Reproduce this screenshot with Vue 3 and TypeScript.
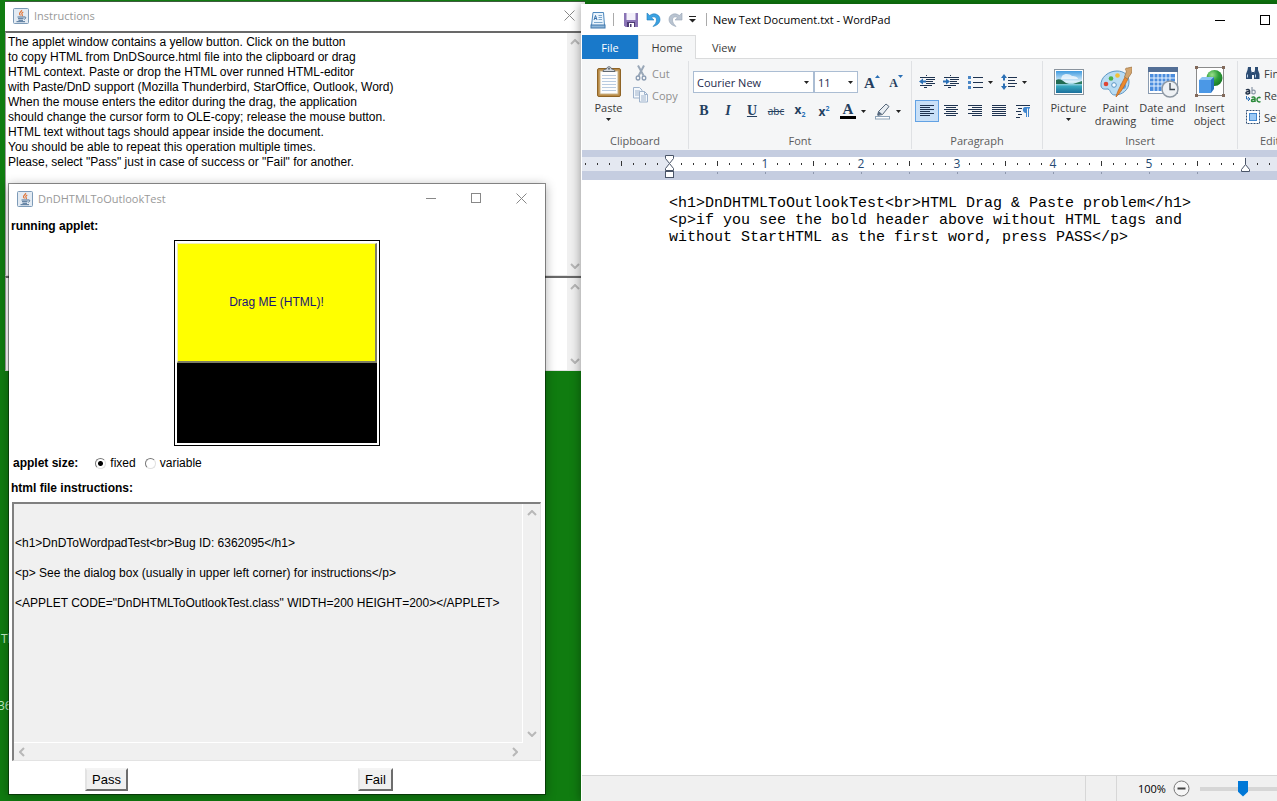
<script setup lang="ts">
import { ref } from 'vue'

const instructions = ref(`The applet window contains a yellow button. Click on the button
to copy HTML from DnDSource.html file into the clipboard or drag
HTML context. Paste or drop the HTML over runned HTML-editor
with Paste/DnD support (Mozilla Thunderbird, StarOffice, Outlook, Word)
When the mouse enters the editor during the drag, the application
should change the cursor form to OLE-copy; release the mouse button.
HTML text without tags should appear inside the document.
You should be able to repeat this operation multiple times.
Please, select "Pass" just in case of success or "Fail" for another.`)

const messages = ref('')

const htmlFile = ref(`

<h1>DnDToWordpadTest<br>Bug ID: 6362095</h1>

<p> See the dialog box (usually in upper left corner) for instructions</p>

<APPLET CODE="DnDHTMLToOutlookTest.class" WIDTH=200 HEIGHT=200></APPLET>`)

const documentLines: string[] = [
  '<h1>DnDHTMLToOutlookTest<br>HTML Drag & Paste problem</h1>',
  '<p>if you see the bold header above without HTML tags and',
  'without StartHTML as the first word, press PASS</p>',
]

const appletSize = ref('fixed')
const fontName = ref('Courier New')
const fontSize = ref('11')
const zoom = ref(50)

const origin = 87
const step = 12
const inch = 96

interface Tick { x: number; kind: 'dot' | 'half' }
const ticks: Tick[] = []
for (let i = -7; i <= 55; i++) {
  if (i === 0 || i === 48 || (i > 0 && i % 8 === 0)) continue
  ticks.push({ x: origin + i * step, kind: i % 4 === 0 ? 'half' : 'dot' })
}
const inches = [1, 2, 3, 4, 5]
const tabStops = Array.from({ length: 11 }, (_, i) => origin + (i + 1) * 48)
</script>

<template>
  <main class="desktop">
    <span class="shortcut shortcut-a">Th</span>
    <span class="shortcut shortcut-b">36</span>

    <section class="window instructions" aria-label="Instructions">
      <header class="java-title">
        <svg class="java-icon" width="16" height="16" viewBox="0 0 16 16">
          <rect x=".5" y=".5" width="15" height="15" rx="1" fill="#e3ebf3" stroke="#7d9bb8" />
          <path d="M8.6 2c1 1.400-3 2.200-2 4.200.3.600.9.900.9 1.300M10.300 4c-1.600.8-2 1.600-1 2.800.3.500 0 1-.5 1.300" fill="none" stroke="#e0763a" stroke-width="1.200" />
          <path d="M4.500 9h6.500M5 10.700h5.500M5.500 12.300h4.500M11 9c2.300-.6 2.300 1.600.2 2.300M3.500 13.700h8.500" fill="none" stroke="#4a6f94" />
        </svg>
        <h2>Instructions</h2>
        <span class="spacer"></span>
        <button class="frame-btn" aria-label="Close">
          <svg width="11" height="11" viewBox="0 0 11 11"><path d="M.5.5l10 10M10.500.5l-10 10" stroke="#888" fill="none" /></svg>
        </button>
      </header>
      <div class="java-area grow">
        <textarea v-model="instructions" readonly aria-label="Instructions text"></textarea>
        <div class="vbar">
          <button aria-label="Scroll up"><svg width="10" height="6" viewBox="0 0 10 6"><path d="M1 5l4-4 4 4" /></svg></button>
          <button aria-label="Scroll down"><svg width="10" height="6" viewBox="0 0 10 6"><path d="M1 1l4 4 4-4" /></svg></button>
        </div>
      </div>
      <div class="java-area messages">
        <textarea v-model="messages" readonly aria-label="Messages"></textarea>
        <div class="vbar">
          <button aria-label="Scroll up"><svg width="10" height="6" viewBox="0 0 10 6"><path d="M1 5l4-4 4 4" /></svg></button>
          <button aria-label="Scroll down"><svg width="10" height="6" viewBox="0 0 10 6"><path d="M1 1l4 4 4-4" /></svg></button>
        </div>
      </div>
    </section>

    <section class="window tester" aria-label="DnDHTMLToOutlookTest">
      <header class="java-title">
        <svg class="java-icon" width="16" height="16" viewBox="0 0 16 16">
          <rect x=".5" y=".5" width="15" height="15" rx="1" fill="#e3ebf3" stroke="#7d9bb8" />
          <path d="M8.600 2c1 1.400-3 2.200-2 4.200.3.600.9.900.9 1.300M10.300 4c-1.600.8-2 1.600-1 2.800.3.500 0 1-.5 1.300" fill="none" stroke="#e0763a" stroke-width="1.200" />
          <path d="M4.500 9h6.500M5 10.700h5.500M5.500 12.300h4.500M11 9c2.300-.6 2.300 1.600.2 2.300M3.500 13.700h8.500" fill="none" stroke="#4a6f94" />
        </svg>
        <h2>DnDHTMLToOutlookTest</h2>
        <span class="spacer"></span>
        <button class="frame-btn" aria-label="Minimize">
          <svg width="11" height="11" viewBox="0 0 11 11"><path d="M0 5.500h10" stroke="#888" /></svg>
        </button>
        <button class="frame-btn" aria-label="Maximize">
          <svg width="11" height="11" viewBox="0 0 11 11"><rect x=".5" y=".5" width="9" height="9" stroke="#888" fill="none" /></svg>
        </button>
        <button class="frame-btn" aria-label="Close">
          <svg width="11" height="11" viewBox="0 0 11 11"><path d="M.5.5l10 10M10.500.5l-10 10" stroke="#888" fill="none" /></svg>
        </button>
      </header>
      <h3>running applet:</h3>
      <div class="applet-frame">
        <div class="applet"><button class="drag-btn">Drag ME (HTML)!</button></div>
      </div>
      <div class="size-row">
        <b id="size-label">applet size:</b>
        <div class="radios" role="radiogroup" aria-labelledby="size-label">
          <label><input v-model="appletSize" type="radio" name="size" value="fixed" />fixed</label>
          <label><input v-model="appletSize" type="radio" name="size" value="variable" />variable</label>
        </div>
      </div>
      <h3><label for="html-file">html file instructions:</label></h3>
      <div class="file-area">
        <textarea id="html-file" v-model="htmlFile" readonly wrap="off"></textarea>
        <div class="vbar">
          <button aria-label="Scroll up"><svg width="10" height="6" viewBox="0 0 10 6"><path d="M1 5l4-4 4 4" /></svg></button>
          <button aria-label="Scroll down"><svg width="10" height="6" viewBox="0 0 10 6"><path d="M1 1l4 4 4-4" /></svg></button>
        </div>
        <div class="hbar">
          <button aria-label="Scroll left"><svg width="6" height="10" viewBox="0 0 6 10"><path d="M5 1l-4 4 4 4" /></svg></button>
          <button aria-label="Scroll right"><svg width="6" height="10" viewBox="0 0 6 10"><path d="M1 1l4 4-4 4" /></svg></button>
        </div>
      </div>
      <footer class="verdict">
        <button>Pass</button>
        <button>Fail</button>
      </footer>
    </section>

    <section class="window wordpad" aria-label="WordPad">
      <header class="wp-title">
        <svg width="16" height="18" viewBox="0 0 16 18">
          <path d="M3 1.500h10.500l1 13H1.500z" fill="#eaf4fc" stroke="#4d88bd" />
          <rect x="1" y="14" width="14" height="3" fill="#8fb6d8" stroke="#3f77ab" />
          <path d="M4 9l1.500-4.500L7 9M4.500 7.500h2" stroke="#3a73ad" fill="none" />
          <path d="M8.500 4.500H12M8.500 6.500H12M8.500 8.500H12M4 11.500h8.500" stroke="#7aa6cc" />
        </svg>
        <i class="bar"></i>
        <button class="quick" aria-label="Save">
          <svg width="14" height="14" viewBox="0 0 14 14">
            <path d="M0 0h14v14H1.500L0 12.500z" fill="#8a74b5" />
            <path d="M2.500 0h9v7h-9z" fill="#f3f0fa" /><path d="M3 9h8v5H3z" fill="#4d3b73" /><path d="M5 10h5v4H5z" fill="#fff" /><path d="M6 11h1.500v3H6z" fill="#4d3b73" />
          </svg>
        </button>
        <button class="quick" aria-label="Undo">
          <svg width="15" height="15" viewBox="0 0 15 15"><path d="M1 1v7h7L5.500 5.700C7.500 4 10.500 5 10.500 8c0 2.500-1.500 4.500-3.500 6.500 4-1 7-3.500 7-7C14 2.500 8 0 3.700 3.500z" fill="#3aa3e3" stroke="#1e79b8" stroke-width=".6" /></svg>
        </button>
        <button class="quick" aria-label="Redo">
          <svg width="15" height="15" viewBox="0 0 15 15"><path d="M14 1v7H7l2.500-2.300C7.500 4 4.500 5 4.500 8c0 2.500 1.500 4.500 3.500 6.500-4-1-7-3.500-7-7C1 2.500 7 0 11.300 3.500z" fill="#b9c4d1" stroke="#97a5b5" stroke-width=".6" /></svg>
        </button>
        <button class="quick narrow" aria-label="Customize Quick Access Toolbar">
          <svg width="7" height="7" viewBox="0 0 7 7"><path d="M0 .5h7" stroke="#222" /><path d="M0 3h7L3.500 6.500z" fill="#222" /></svg>
        </button>
        <i class="bar"></i>
        <h1>New Text Document.txt - WordPad</h1>
        <span class="spacer"></span>
        <button class="wp-frame-btn" aria-label="Minimize"><svg width="10" height="10" viewBox="0 0 10 10"><path d="M0 5.500h10" stroke="#000" /></svg></button>
        <button class="wp-frame-btn" aria-label="Maximize"><svg width="10" height="10" viewBox="0 0 10 10"><rect x=".5" y=".5" width="9" height="9" stroke="#000" fill="none" /></svg></button>
        <button class="wp-frame-btn" aria-label="Close"><svg width="10" height="10" viewBox="0 0 10 10"><path d="M0 0l10 10M10 0L0 10" stroke="#000" /></svg></button>
      </header>

      <nav class="tabs">
        <button class="tab file">File</button>
        <button class="tab active">Home</button>
        <button class="tab">View</button>
      </nav>

      <div class="ribbon">
        <div class="group clipboard">
          <div class="body">
            <button class="big">
              <svg width="28" height="32" viewBox="0 0 28 32">
                <rect x="2.500" y="2.500" width="23" height="28" rx="1.500" fill="#b98a45" stroke="#8f6426" />
                <rect x="5" y="5" width="18" height="23" fill="#fdfdfd" stroke="#c9b48c" />
                <path d="M7 9.500h14M7 12.500h14M7 15.500h14M7 18.500h14M7 21.500h14M7 24.500h14" stroke="#b9cbe0" />
                <path d="M8 5.500c0-2 2-2 3.500-2.500C12 0 16 0 16.500 3 18 3.500 20 3.500 20 5.500z" fill="#d5d9de" stroke="#5f6872" />
                <circle cx="14" cy="2.800" r="1" fill="#5f6872" />
              </svg>
              <span>Paste</span>
              <svg class="caret" width="7" height="4" viewBox="0 0 7 4"><path d="M1 0h5L3.500 3z" /></svg>
            </button>
            <div class="stack">
              <button class="small dim">
                <svg width="18" height="18" viewBox="0 0 18 18">
                  <path d="M6 1.500l5.500 10M12 1.500L6.500 12" stroke="#9aa8b8" stroke-width="2" /><ellipse cx="6" cy="14" rx="1.800" ry="2" fill="none" stroke="#8c9db3" stroke-width="1.300" /><ellipse cx="12" cy="14" rx="1.800" ry="2" fill="none" stroke="#8c9db3" stroke-width="1.300" />
                </svg>Cut
              </button>
              <button class="small dim">
                <svg width="18" height="18" viewBox="0 0 18 18" stroke="#9fb3cc" fill="#f4f8fc">
                  <path d="M1.500 1.500h6l2.500 2.500v8H1.500z" /><path d="M3 5h5M3 7h4M3 9h4" /><path d="M7.500 5.500h5l3 3v7.500h-8z" /><path d="M12.500 5.500v3h3M9 10h5M9 12h5M9 14h5" fill="none" />
                </svg>Copy
              </button>
            </div>
          </div>
          <div class="caption">Clipboard</div>
        </div>

        <div class="group font">
          <div class="body rows">
            <div class="row combos">
              <div class="combo wide">
                <select v-model="fontName" aria-label="Font family"><option>Courier New</option></select>
                <svg class="caret" width="5" height="3" viewBox="0 0 5 3"><path d="M0 0h5L2.500 3z" /></svg>
              </div>
              <div class="combo">
                <select v-model="fontSize" aria-label="Font size"><option>11</option></select>
                <svg class="caret" width="5" height="3" viewBox="0 0 5 3"><path d="M0 0h5L2.500 3z" /></svg>
              </div>
              <button class="tool grow-font" aria-label="Grow font"><b>A</b><svg width="5" height="3" viewBox="0 0 5 3"><path d="M0 3h5L2.500 0z" fill="#2a6fb5" /></svg></button>
              <button class="tool shrink-font" aria-label="Shrink font"><b>A</b><svg width="5" height="3" viewBox="0 0 5 3"><path d="M0 0h5L2.500 3z" fill="#2a6fb5" /></svg></button>
            </div>
            <div class="row">
              <button class="tool serif"><b>B</b></button>
              <button class="tool serif"><b><i>I</i></b></button>
              <button class="tool serif"><b><u>U</u></b></button>
              <button class="tool strike"><s>abc</s></button>
              <button class="tool script"><b>x<sub>2</sub></b></button>
              <button class="tool script"><b>x<sup>2</sup></b></button>
              <button class="tool split" aria-label="Text color">
                <span class="ink">A</span>
                <svg class="caret" width="5" height="3" viewBox="0 0 5 3"><path d="M0 0h5L2.500 3z" /></svg>
              </button>
              <button class="tool split" aria-label="Text highlight color">
                <svg width="17" height="17" viewBox="0 0 17 17">
                  <path d="M4.500 8.500L12 1l3 2.500-6.500 8-4.500.8z" fill="#e8edf2" stroke="#56677a" /><path d="M3 12.500l1.500-4.500 3.500 3z" fill="#56697f" /><rect x="1.500" y="13.500" width="14" height="2.500" fill="#fff" stroke="#8ea3b8" />
                </svg>
                <svg class="caret" width="5" height="3" viewBox="0 0 5 3"><path d="M0 0h5L2.500 3z" /></svg>
              </button>
            </div>
          </div>
          <div class="caption">Font</div>
        </div>

        <div class="group paragraph">
          <div class="body rows">
            <div class="row">
              <button class="tool" aria-label="Decrease indent"><svg class="lines" width="16" height="14" viewBox="0 0 16 14"><path d="M1 2.500h15M8 4.500h8M8 6.500h6M8 8.500h8M1 10.500h12M5 12.500h2" /><path d="M7.500 0v14" stroke-dasharray="1 1" /><path d="M0 6.500l4-3v2h3v2H4v2z" fill="#2a6fb5" stroke="none" /></svg></button>
              <button class="tool" aria-label="Increase indent"><svg class="lines" width="16" height="14" viewBox="0 0 16 14"><path d="M1 2.500h15M8 4.500h8M8 6.500h6M8 8.500h8M1 10.500h12M5 12.500h2" /><path d="M7.500 0v14" stroke-dasharray="1 1" /><path d="M7 6.500l-4-3v2H0v2h3v2z" fill="#2a6fb5" stroke="none" /></svg></button>
              <button class="tool split" aria-label="Start a list">
                <svg class="lines" width="15" height="14" viewBox="0 0 15 14"><path d="M5 2.500h10M5 7.500h10M5 12.500h10" /><path d="M0 1h3v3H0zM0 6h3v3H0zM0 11h3v3H0z" fill="#4a86c5" stroke="none" /></svg>
                <svg class="caret" width="5" height="3" viewBox="0 0 5 3"><path d="M0 0h5L2.500 3z" /></svg>
              </button>
              <button class="tool split" aria-label="Line spacing">
                <svg class="lines" width="16" height="16" viewBox="0 0 16 16"><path d="M7 3.500h9M7 6.500h7M7 9.500h9M7 12.500h7" /><path d="M3 0l3 4H4v2.500H2V4H0zM3 16l3-4H4V9.500H2V12H0z" fill="#2a6fb5" stroke="none" /></svg>
                <svg class="caret" width="5" height="3" viewBox="0 0 5 3"><path d="M0 0h5L2.500 3z" /></svg>
              </button>
            </div>
            <div class="row">
              <button class="tool on" aria-label="Align left"><svg class="lines" width="14" height="12" viewBox="0 0 14 12"><path d="M0 .5h14M0 2.500h10M0 4.500h14M0 6.500h10M0 8.500h14M0 10.500h10" /></svg></button>
              <button class="tool" aria-label="Center"><svg class="lines" width="14" height="12" viewBox="0 0 14 12"><path d="M0 .5h14M2 2.500h10M0 4.500h14M2 6.500h10M0 8.500h14M2 10.500h10" /></svg></button>
              <button class="tool" aria-label="Align right"><svg class="lines" width="14" height="12" viewBox="0 0 14 12"><path d="M0 .5h14M4 2.500h10M0 4.500h14M4 6.500h10M0 8.500h14M4 10.500h10" /></svg></button>
              <button class="tool" aria-label="Justify"><svg class="lines" width="14" height="12" viewBox="0 0 14 12"><path d="M0 .5h14M0 2.500h14M0 4.500h14M0 6.500h14M0 8.500h14M0 10.500h14" /></svg></button>
              <button class="tool" aria-label="Paragraph"><svg class="lines" width="14" height="14" viewBox="0 0 14 14"><path d="M0 1.500h14M2 4.500h4M0 7.500h5M2 10.500h4M0 13.500h4" /><path d="M9 3h5v1.500h-1V13h-1V4.500h-1V13h-1V9C6 9 6 3 9 3z" fill="#3f86cf" stroke="none" /></svg></button>
            </div>
          </div>
          <div class="caption">Paragraph</div>
        </div>

        <div class="group insert">
          <div class="body">
            <button class="big">
              <svg width="32" height="32" viewBox="0 0 32 32">
                <defs>
                  <linearGradient id="sky" x1="0" y1="0" x2="0" y2="1"><stop offset="0" stop-color="#3f9be0" /><stop offset=".5" stop-color="#e3f3fb" /><stop offset=".7" stop-color="#36a6bd" /><stop offset="1" stop-color="#1b6f9c" /></linearGradient>
                </defs>
                <rect x="1.500" y="3.500" width="29" height="25" fill="#fff" stroke="#8a949e" />
                <rect x="3" y="5" width="26" height="22" fill="url(#sky)" />
                <path d="M3 14c4-2 7 1 10 3l3 1H3z" fill="#226b52" /><path d="M20 18l9-3v3z" fill="#2d7c62" /><path d="M9 10c3-3 8-2 10 0 3 0 6 1 6 3H8z" fill="#fff" opacity=".7" />
              </svg>
              <span>Picture</span>
              <svg class="caret" width="7" height="4" viewBox="0 0 7 4"><path d="M1 0h5L3.500 3z" /></svg>
            </button>
            <button class="big">
              <svg width="32" height="32" viewBox="0 0 32 32">
                <path d="M1 20C0 11 9 5 17 5c7 0 12 4 12 11 0 8-7 13-14 13-5 0-4-5-7-6-3 0-6 1-7-3z" fill="#b9dcf3" stroke="#5c96c4" />
                <circle cx="6" cy="18" r="2.300" fill="#dd4535" /><circle cx="11" cy="12.500" r="2.300" fill="#4ab04a" /><circle cx="17.500" cy="9.500" r="2.300" fill="#f3bf35" /><circle cx="14" cy="19" r="2.300" fill="#f7fbff" stroke="#5c96c4" /><circle cx="23" cy="20" r="3" fill="#5b9be0" />
                <path d="M16 31c1-5 4-10 9-20l3 2c-4 8-7 13-12 18z" fill="#ec8a2e" stroke="#b9621b" stroke-width=".7" /><path d="M24.500 11l2-6c-2-2-1-3 1-3l5-1-1 6-4 6z" fill="#d3a56e" stroke="#9b7140" stroke-width=".7" />
              </svg>
              <span>Paint<br />drawing</span>
            </button>
            <button class="big">
              <svg width="32" height="32" viewBox="0 0 32 32">
                <rect x="1.500" y="1.500" width="29" height="26" fill="#fff" stroke="#8a9bb0" /><rect x="1" y="1" width="30" height="5" fill="#536f96" />
                <path d="M3 8h25v17H3z" fill="#4b8dde" /><path d="M3 12h25M3 16h25M3 20h25M7 8v17M11 8v17M15 8v17M19 8v17M23 8v17" stroke="#e8f3ff" />
                <circle cx="23" cy="23" r="8" fill="#eef1f4" stroke="#8d97a2" stroke-width="1.500" /><path d="M23 17v6.500h5" fill="none" stroke="#3e4852" stroke-width="1.300" />
              </svg>
              <span>Date and<br />time</span>
            </button>
            <button class="big">
              <svg width="32" height="32" viewBox="0 0 32 32">
                <defs><radialGradient id="ball" cx=".35" cy=".3" r=".8"><stop offset="0" stop-color="#9be08b" /><stop offset=".5" stop-color="#2fa03a" /><stop offset="1" stop-color="#167024" /></radialGradient></defs>
                <rect x="2.500" y="1.500" width="27" height="28" fill="#fff" stroke="#8b8b8b" />
                <circle cx="20.500" cy="12" r="8" fill="url(#ball)" />
                <path d="M5 14l3-3h12l-3 3z" fill="#8cc3f5" /><path d="M5 14h12v13H5z" fill="#4b98e6" /><path d="M17 14l3-3v12l-3 4z" fill="#2a72c2" />
                <path d="M1 0h3v3H1zM28 0h3v3h-3zM1 28h3v3H1zM28 28h3v3h-3z" fill="#82695a" />
              </svg>
              <span>Insert<br />object</span>
            </button>
          </div>
          <div class="caption">Insert</div>
        </div>

        <div class="group editing">
          <div class="body">
            <div class="stack">
              <button class="small">
                <svg width="16" height="16" viewBox="0 0 16 16"><path d="M3 2h3v3l1 3v6H1V9l1.500-4zM10 2h3v3l1.500 4v5H9V8l1-3z" fill="#2d4d74" /><path d="M7 7h2v3H7z" fill="#2d4d74" /><path d="M2.500 9.500v3M10.500 9.500v3" stroke="#b9d1ea" /></svg>Find
              </button>
              <button class="small">
                <svg width="16" height="16" viewBox="0 0 16 16" fill="none" stroke-width="1.500">
                  <path d="M1 3c1.500-1 3.500-.8 3.500.8V7M4.500 4.600C2 4.300 1 5 1 6s2 1.500 3.500 0" stroke="#24344a" />
                  <path d="M7 0v7M7 4c.8-1.500 3.300-1.300 3.300 1S7.800 7.500 7 6" stroke="#8a97a6" stroke-width="1.200" />
                  <path d="M6.500 10.500c1.500-1 3.500-.8 3.500.8V15M10 12.200c-2.500-.3-3.500.5-3.500 1.500s2 1.300 3.500 0M15.500 10.800c-1.500-1-3.500 0-3.500 1.900s2 2.800 3.500 1.800" stroke="#2b8a3a" />
                  <path d="M1.500 9v3h3M3 10l2 2-2 2" stroke="#2a6fb5" stroke-width="1" />
                </svg>Replace
              </button>
              <button class="small">
                <svg width="16" height="16" viewBox="0 0 16 16"><rect x="1.500" y="1.500" width="13" height="13" fill="#fff" stroke="#2d4d74" stroke-dasharray="2 1" /><rect x="4.500" y="4.500" width="7" height="7" fill="#9bc9f5" stroke="#3f86cf" /></svg>Select all
              </button>
            </div>
          </div>
          <div class="caption">Editing</div>
        </div>
      </div>

      <svg class="ruler" width="100%" height="30" aria-label="Ruler">
        <rect x="0" y="7" width="100%" height="14" fill="#e4e8f1" />
        <rect :x="origin" y="7" :width="inch * 6" height="14" fill="#fff" />
        <line v-for="t in ticks" :key="t.x" :x1="t.x" :x2="t.x" :y1="t.kind === 'half' ? 11 : 13" :y2="t.kind === 'half' ? 16 : 15" />
        <line v-for="x in tabStops" :key="'s' + x" class="stop" :x1="x" :x2="x" y1="22" y2="24" />
        <text v-for="n in inches" :key="n" :x="origin + n * inch" y="18">{{ n }}</text>
        <g class="marker">
          <path d="M83.500 5.500h8v3l-4 5-4-5z" />
          <path d="M87.500 13.500l4 5v2h-8v-2z" />
          <rect x="83.500" y="21.500" width="8" height="6" />
          <path d="M663.500 8v6.500l4 5v2h-8v-2l4-5" />
        </g>
      </svg>

      <article class="page">
        <p v-for="line in documentLines" :key="line">{{ line }}</p>
      </article>

      <footer class="status">
        <i class="cell"></i>
        <div class="zoom">
          <span>100%</span>
          <button aria-label="Zoom out">
            <svg width="17" height="17" viewBox="0 0 17 17"><circle cx="8.500" cy="8.500" r="7.500" fill="#f6f6f6" stroke="#777" /><path d="M4.500 8.500h8" stroke="#444" stroke-width="2" /></svg>
          </button>
          <input v-model="zoom" type="range" min="0" max="100" aria-label="Zoom" />
        </div>
      </footer>
    </section>
  </main>
</template>

<style>
html,
body,
#app {
  height: 100%;
  margin: 0;
}
</style>

<style scoped>
* {
  box-sizing: border-box;
}
.desktop {
  position: relative;
  height: 100%;
  min-height: 600px;
  overflow: hidden;
  background: #107c10;
  color: #000;
  font: 12px/15px "Liberation Sans", Arial, sans-serif;
}
button {
  margin: 0;
  padding: 0;
  border: 0;
  background: none;
  color: inherit;
  font: inherit;
}
h1, h2, h3, p {
  margin: 0;
  font: inherit;
}
svg {
  display: block;
  flex: none;
}
textarea {
  display: block;
  margin: 0;
  padding: 2px 1px;
  border: 0;
  outline: 0;
  resize: none;
  overflow: hidden;
  background: transparent;
  color: #000;
  font: inherit;
}
.spacer {
  flex: 1;
}
.shortcut {
  position: absolute;
  color: #c4ecc4;
  font: 12px/16px "Open Sans", sans-serif;
}
.shortcut-a {
  left: 1px;
  top: 631px;
}
.shortcut-b {
  left: -2px;
  top: 698px;
}
.window {
  position: absolute;
  display: flex;
  flex-direction: column;
}

/* Java windows */
.java-title {
  display: flex;
  align-items: center;
  flex: none;
  height: 29px;
  padding: 0 1px 2px 8px;
}
.java-title h2 {
  margin-left: 5px;
  color: #999;
  font: 11px/16px "Open Sans", sans-serif;
}
.frame-btn {
  display: grid;
  place-items: center;
  width: 45px;
  height: 27px;
}
.instructions {
  left: 5px;
  top: 1px;
  width: 580px;
  height: 370px;
  border-top: 1px solid #3d5c3d;
  background: #fff;
}
.instructions .frame-btn {
  width: 30px;
}
.java-area {
  display: flex;
  margin-right: 3px;
  border: 1px solid #a0a0a0;
  border-top: 2px solid #696969;
  border-right: 0;
  border-bottom: 1px solid #e3e3e3;
}
.grow {
  flex: 1;
}
.java-area textarea {
  flex: 1;
  padding: 2px;
}
.messages {
  flex: none;
  height: 95px;
}
.vbar,
.hbar {
  display: flex;
  justify-content: space-between;
  background: #f0f0f0;
}
.vbar {
  flex-direction: column;
  width: 15px;
}
.vbar button,
.hbar button {
  display: grid;
  place-items: center;
  width: 100%;
  height: 18px;
}
.vbar path,
.hbar path {
  fill: none;
  stroke: #b8b8b8;
  stroke-width: 2;
}
.tester {
  left: 8px;
  top: 183px;
  width: 538px;
  height: 612px;
  border: 1px solid rgba(0, 0, 0, 0.42);
  background: #fff;
  background-clip: padding-box;
  box-shadow: 0 2px 10px rgba(0, 0, 0, 0.3);
}
.tester h3 {
  padding: 0 2px;
  font-weight: 700;
  line-height: 15px;
}
.tester .java-title {
  height: 35px;
  padding-bottom: 6px;
}
.applet-frame {
  align-self: center;
  margin: 6px 0 10px;
  padding: 2px;
  border: 1px solid #000;
}
.applet {
  width: 200px;
  height: 200px;
  background: #000;
}
.drag-btn {
  display: block;
  width: 100%;
  height: 120px;
  border: solid;
  border-width: 1px 2px 2px 1px;
  border-color: #f0f0b0 #7d7d66 #7d7d66 #f0f0b0;
  background: #ff0;
  color: #1a1478;
}
.size-row {
  display: flex;
  gap: 17px;
  margin-bottom: 10px;
  padding-left: 4px;
}
.radios,
.radios label {
  display: flex;
  align-items: center;
}
.radios {
  gap: 9px;
}
.radios label {
  gap: 4px;
}
.radios input {
  appearance: none;
  width: 11px;
  height: 11px;
  margin: 0;
  border: 1px solid;
  border-color: #777 #e0e0e0 #e0e0e0 #777;
  border-radius: 50%;
  background: #fff;
}
.radios input:checked {
  background: radial-gradient(circle, #000 2px, #fff 3px);
}
.file-area {
  display: grid;
  grid-template: 1fr 17px / 1fr 17px;
  flex: 1;
  margin: 6px 4px 0 3px;
  border: 1px solid #e3e3e3;
  border-top: 2px solid #808080;
  border-left: 2px solid #808080;
  background: #f0f0f0;
}
.file-area textarea {
  width: 100%;
  height: 100%;
  border-right: 1px solid #fff;
  border-bottom: 1px solid #fff;
  white-space: pre;
}
.file-area .vbar {
  width: 17px;
}
.hbar button {
  width: 16px;
  height: 100%;
}
.verdict {
  display: flex;
  flex: none;
  gap: 230px;
  padding: 7px 0 3px 76px;
}
.verdict button {
  height: 23px;
  padding: 0 5px;
  border: 2px solid;
  border-color: #f4f4f4 #6d6d6d #6d6d6d #e3e3e3;
  background: #f0f0f0;
  font-size: 13px;
}

/* WordPad */
.wordpad {
  left: 581px;
  right: -55px;
  top: 4px;
  bottom: 0;
  border-left: 1px solid #fff;
  background: #fff;
  box-shadow: 0 0 10px rgba(0, 0, 0, 0.4);
  color: #3b3b3b;
  font: 11px/13px "Open Sans", "Noto Sans", sans-serif;
}
.wp-title {
  display: flex;
  align-items: center;
  flex: none;
  height: 31px;
  padding-left: 8px;
}
.wp-title .bar {
  width: 1px;
  height: 13px;
  margin: 0 6px 0 7px;
  background: #aaa;
}
.wp-title h1 {
  color: #000;
  font-size: 11px;
  line-height: 16px;
}
.quick {
  display: grid;
  place-items: center;
  width: 22px;
  height: 22px;
}
.narrow {
  width: 13px;
}
.wp-frame-btn {
  display: grid;
  place-items: center;
  width: 45px;
  height: 30px;
}
.tabs {
  display: flex;
  flex: none;
  height: 24px;
  border-bottom: 1px solid #dadbdc;
}
.tab {
  width: 56px;
  height: 24px;
  border: 1px solid transparent;
  border-bottom: 0;
  font-size: 11px;
}
.tab.file {
  background: #1979ca;
  color: #fff;
}
.tab.active {
  width: 58px;
  border-color: #dadbdc;
  background: #f5f6f7;
}
.ribbon {
  display: flex;
  flex: none;
  padding: 2px 0 1px;
  background: #f5f6f7;
}
.group {
  flex: none;
  border-right: 1px solid #dfe1e4;
}
.clipboard { width: 107px; }
.font { width: 223px; }
.paragraph { width: 131px; }
.insert { width: 195px; }
.editing { width: 80px; }
.body {
  display: flex;
  height: 72px;
}
.caption {
  height: 16px;
  line-height: 16px;
  text-align: center;
  color: #5c5c5c;
}
.caret {
  fill: #222;
}
.big {
  display: flex;
  flex-direction: column;
  align-items: center;
  flex: none;
  width: 47px;
  padding-top: 5px;
  white-space: nowrap;
}
.big span {
  margin: 3px 0 4px;
}
.clipboard .body {
  padding-left: 3px;
}
.insert .body {
  padding-left: 2px;
}
.stack {
  display: flex;
  flex-direction: column;
  padding-top: 1px;
}
.small {
  display: flex;
  align-items: center;
  gap: 2px;
  height: 22px;
  white-space: nowrap;
}
.dim {
  color: #8f8f8f;
}
.editing .stack {
  padding-left: 7px;
}
.editing .small {
  gap: 3px;
}
.rows {
  flex-direction: column;
  gap: 7px;
  padding: 10px 0 0 3px;
}
.row {
  display: flex;
  height: 22px;
}
.combos {
  padding-left: 1px;
}
.combo {
  position: relative;
  width: 44px;
  height: 22px;
}
.combo.wide {
  width: 121px;
}
.combo select {
  appearance: none;
  width: 100%;
  height: 22px;
  padding: 0 3px;
  border: 1px solid #abbdd3;
  border-radius: 0;
  background: #fff;
  color: #1e2b4d;
  font: inherit;
}
.combo .caret {
  position: absolute;
  top: 10px;
  right: 5px;
}
.tool {
  display: flex;
  align-items: center;
  justify-content: center;
  width: 24px;
  height: 22px;
  color: #243f60;
}
.split {
  gap: 5px;
  width: 34px;
}
.serif {
  font: 14px/16px "Liberation Serif", "Times New Roman", serif;
}
.strike {
  font-size: 10px;
}
.script {
  font-size: 12px;
}
.script sub,
.script sup {
  color: #2a6fb5;
  font-size: 7px;
  line-height: 1;
}
.grow-font,
.shrink-font {
  align-items: flex-start;
  padding-top: 4px;
  font: 15px/16px "Liberation Serif", "Times New Roman", serif;
}
.grow-font {
  width: 28px;
}
.shrink-font {
  width: 20px;
  font-size: 12px;
}
.ink {
  width: 16px;
  border-bottom: 3px solid #000;
  font: 700 15px/13px "Liberation Serif", "Times New Roman", serif;
  text-align: center;
}
.on {
  border: 1px solid #62a2e4;
  background: #c9e0f7;
}
.lines {
  stroke: #1e3350;
  fill: none;
}
.ruler {
  background: #c5cde0;
}
.ruler line {
  stroke: #333;
  shape-rendering: crispEdges;
}
.ruler .stop {
  stroke: #8d97ad;
}
.ruler text {
  fill: #264a73;
  font-size: 12px;
  text-anchor: middle;
}
.marker {
  fill: #fff;
  stroke: #4a5568;
}
.page {
  flex: 1;
  padding: 15px 87px;
  color: #000;
  font: 15px/17px "Liberation Mono", "Courier New", monospace;
  white-space: pre;
}
.status {
  display: flex;
  justify-content: flex-end;
  flex: none;
  height: 26px;
  border-top: 1px solid #d7d7d7;
  background: #f0f0f0;
}
.cell {
  width: 32px;
  border: solid #d7d7d7;
  border-width: 0 1px;
}
.zoom {
  display: flex;
  align-items: center;
  width: 215px;
  padding-left: 21px;
  color: #000;
  font-size: 11px;
}
.zoom span {
  width: 35px;
}
.zoom input {
  appearance: none;
  width: 86px;
  height: 16px;
  margin: 0 0 0 10px;
  background: linear-gradient(#d6d6d6, #d6d6d6) center / 100% 4px no-repeat;
}
.zoom input::-webkit-slider-thumb {
  appearance: none;
  width: 10px;
  height: 16px;
  background: #0078d7;
  clip-path: polygon(0 0, 100% 0, 100% 70%, 50% 100%, 0 70%);
}
</style>
